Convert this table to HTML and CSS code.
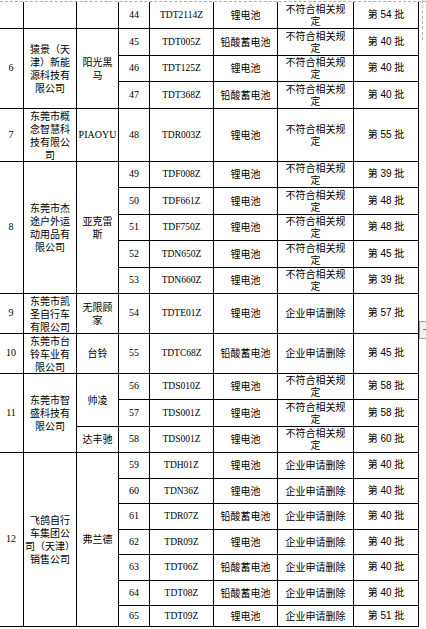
FILE: index.html
```html
<!DOCTYPE html>
<html lang="zh">
<head>
<meta charset="utf-8">
<link rel="stylesheet" href="styles.css">
</head>
<body>
<div class="page-edge"></div>
<div class="page-side"></div>
<div class="page-marker"><span class="marker-dash"></span></div>
<table class="list">
  <colgroup>
    <col class="c-idx"><col class="c-co"><col class="c-brand"><col class="c-no"><col class="c-code"><col class="c-bat"><col class="c-reason"><col class="c-batch">
  </colgroup>
  <tbody>
    <tr class="h26 first">
      <td></td><td></td><td></td>
      <td class="num">44</td><td class="code">TDT2114Z</td><td>锂电池</td><td>不符合相关规<br>定</td><td class="batch">第 54 批</td>
    </tr>
    <tr class="h27">
      <td rowspan="3" class="num">6</td>
      <td rowspan="3" class="co">猿景（天<br>津）新能<br>源科技有<br>限公司</td>
      <td rowspan="3" class="co">阳光黑<br>马</td>
      <td class="num">45</td><td class="code">TDT005Z</td><td>铅酸蓄电池</td><td>不符合相关规<br>定</td><td class="batch">第 40 批</td>
    </tr>
    <tr class="h26">
      <td class="num">46</td><td class="code">TDT125Z</td><td>锂电池</td><td>不符合相关规<br>定</td><td class="batch">第 40 批</td>
    </tr>
    <tr class="h27">
      <td class="num">47</td><td class="code">TDT368Z</td><td>铅酸蓄电池</td><td>不符合相关规<br>定</td><td class="batch">第 40 批</td>
    </tr>
    <tr class="h51">
      <td class="num">7</td>
      <td class="co">东莞市概<br>念智慧科<br>技有限公<br>司</td>
      <td class="latin">PIAOYU</td>
      <td class="num">48</td><td class="code">TDR003Z</td><td>锂电池</td><td>不符合相关规<br>定</td><td class="batch">第 55 批</td>
    </tr>
    <tr class="h26">
      <td rowspan="5" class="num">8</td>
      <td rowspan="5" class="co">东莞市杰<br>途户外运<br>动用品有<br>限公司</td>
      <td rowspan="5" class="co">亚克雷<br>斯</td>
      <td class="num">49</td><td class="code">TDF008Z</td><td>锂电池</td><td>不符合相关规<br>定</td><td class="batch">第 39 批</td>
    </tr>
    <tr class="h27">
      <td class="num">50</td><td class="code">TDF661Z</td><td>锂电池</td><td>不符合相关规<br>定</td><td class="batch">第 48 批</td>
    </tr>
    <tr class="h26">
      <td class="num">51</td><td class="code">TDF750Z</td><td>锂电池</td><td>不符合相关规<br>定</td><td class="batch">第 48 批</td>
    </tr>
    <tr class="h27">
      <td class="num">52</td><td class="code">TDN650Z</td><td>锂电池</td><td>不符合相关规<br>定</td><td class="batch">第 45 批</td>
    </tr>
    <tr class="h26">
      <td class="num">53</td><td class="code">TDN660Z</td><td>锂电池</td><td>不符合相关规<br>定</td><td class="batch">第 39 批</td>
    </tr>
    <tr class="h39">
      <td class="num">9</td>
      <td class="co">东莞市凯<br>圣自行车<br>有限公司</td>
      <td class="co">无限顾<br>家</td>
      <td class="num">54</td><td class="code">TDTE01Z</td><td>锂电池</td><td>企业申请删除</td><td class="batch">第 57 批</td>
    </tr>
    <tr class="h38">
      <td class="num">10</td>
      <td class="co">东莞市台<br>铃车业有<br>限公司</td>
      <td>台铃</td>
      <td class="num">55</td><td class="code">TDTC68Z</td><td>铅酸蓄电池</td><td>企业申请删除</td><td class="batch">第 45 批</td>
    </tr>
    <tr class="h26">
      <td rowspan="3" class="num">11</td>
      <td rowspan="3" class="co">东莞市智<br>盛科技有<br>限公司</td>
      <td rowspan="2">帅凌</td>
      <td class="num">56</td><td class="code">TDS010Z</td><td>锂电池</td><td>不符合相关规<br>定</td><td class="batch">第 58 批</td>
    </tr>
    <tr class="h27">
      <td class="num">57</td><td class="code">TDS001Z</td><td>锂电池</td><td>不符合相关规<br>定</td><td class="batch">第 58 批</td>
    </tr>
    <tr class="h26">
      <td>达丰驰</td>
      <td class="num">58</td><td class="code">TDS001Z</td><td>锂电池</td><td>不符合相关规<br>定</td><td class="batch">第 60 批</td>
    </tr>
    <tr class="h26">
      <td rowspan="7" class="num">12</td>
      <td rowspan="7" class="co">飞鸽自行<br>车集团公<br>司（天津）<br>销售公司</td>
      <td rowspan="7">弗兰德</td>
      <td class="num">59</td><td class="code">TDH01Z</td><td>锂电池</td><td>企业申请删除</td><td class="batch">第 40 批</td>
    </tr>
    <tr class="h25">
      <td class="num">60</td><td class="code">TDN36Z</td><td>锂电池</td><td>企业申请删除</td><td class="batch">第 40 批</td>
    </tr>
    <tr class="h26">
      <td class="num">61</td><td class="code">TDR07Z</td><td>铅酸蓄电池</td><td>企业申请删除</td><td class="batch">第 40 批</td>
    </tr>
    <tr class="h25">
      <td class="num">62</td><td class="code">TDR09Z</td><td>锂电池</td><td>企业申请删除</td><td class="batch">第 40 批</td>
    </tr>
    <tr class="h26">
      <td class="num">63</td><td class="code">TDT06Z</td><td>铅酸蓄电池</td><td>企业申请删除</td><td class="batch">第 40 批</td>
    </tr>
    <tr class="h25">
      <td class="num">64</td><td class="code">TDT08Z</td><td>铅酸蓄电池</td><td>企业申请删除</td><td class="batch">第 40 批</td>
    </tr>
    <tr class="h21">
      <td class="num">65</td><td class="code">TDT09Z</td><td>锂电池</td><td>企业申请删除</td><td class="batch">第 51 批</td>
    </tr>
  </tbody>
</table>
</body>
</html>
```
FILE: styles.css
```css
html, body {
  margin: 0;
  padding: 0;
  background: #fff;
}
body {
  position: relative;
  width: 426px;
  height: 629px;
  overflow: hidden;
  color: #000;
  font-family: "Noto Sans CJK SC", "Noto Sans", sans-serif;
}
.page-edge {
  margin-top: 1px;
  height: 0;
  border-top: 1px dashed #b0b0b0;
}
.page-side {
  position: absolute;
  left: 422px;
  top: 0;
  width: 0;
  height: 40px;
  border-left: 1px dashed #b0b0b0;
}
.page-marker {
  position: absolute;
  left: 419px;
  top: 321px;
  width: 10px;
  height: 16px;
  border: 1px solid #a0a0a0;
  background: #f2f2f2;
}
.marker-dash {
  position: absolute;
  left: 3px;
  top: 7px;
  width: 3px;
  height: 1px;
  background: #777;
}
.list {
  border-collapse: collapse;
  table-layout: fixed;
  width: 421px;
  margin-left: -2px;
}
.c-idx { width: 25px; }
.c-co { width: 53px; }
.c-brand { width: 42px; }
.c-no { width: 31px; }
.c-code { width: 64px; }
.c-bat { width: 64px; }
.c-reason { width: 76px; }
.c-batch { width: 65px; }
.list td {
  border: 1px solid #000;
  padding: 0;
  text-align: center;
  vertical-align: middle;
  font-size: 10px;
  line-height: 12px;
  white-space: nowrap;
  overflow: visible;
}
.list td.co {
  line-height: 13px;
}
.list tr.first td {
  border-top: none;
}
.list td.num {
  font-family: "Liberation Serif", serif;
  font-size: 10px;
}
.list td.code {
  font-family: "Liberation Serif", serif;
  font-size: 9.5px;
}
.list td.latin {
  font-family: "Liberation Serif", serif;
  font-size: 10px;
}
.list td.batch {
  font-family: "Liberation Sans", "Noto Sans CJK SC", sans-serif;
  font-size: 10px;
}
.h21 { height: 21px; }
.h25 { height: 25px; }
.h26 { height: 26px; }
.h27 { height: 27px; }
.h38 { height: 38px; }
.h39 { height: 39px; }
.h51 { height: 51px; }
```
